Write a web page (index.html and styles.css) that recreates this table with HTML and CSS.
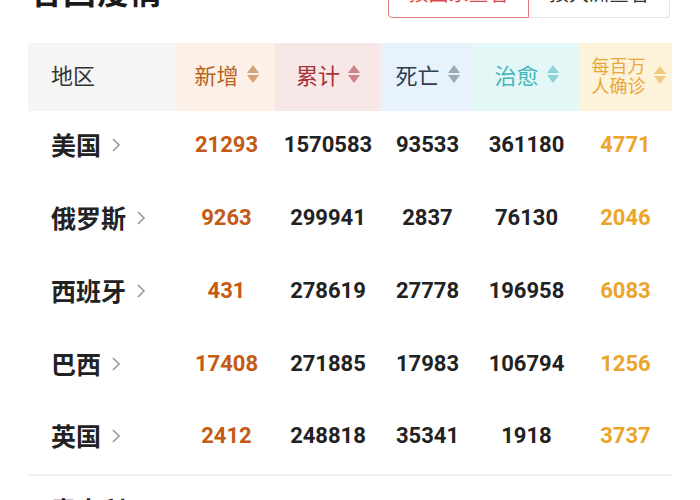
FILE: index.html
```html
<!DOCTYPE html>
<html lang="zh">
<head>
<meta charset="utf-8">
<link rel="stylesheet" href="styles.css">
</head>
<body>
<div class="page">
  <div class="topbar">
    <h1 class="title">各国疫情</h1>
    <div class="switch">
      <span class="btn btn-active">按国家查看</span>
      <span class="btn">按大洲查看</span>
    </div>
  </div>

  <div class="table">
    <div class="head">
      <div class="hc hc-area">地区</div>
      <div class="hc hc-new">新增<span class="sort"><i class="up"></i><i class="down"></i></span></div>
      <div class="hc hc-total">累计<span class="sort"><i class="up"></i><i class="down"></i></span></div>
      <div class="hc hc-dead">死亡<span class="sort"><i class="up"></i><i class="down"></i></span></div>
      <div class="hc hc-heal">治愈<span class="sort"><i class="up"></i><i class="down"></i></span></div>
      <div class="hc hc-pm"><span class="two"><span class="ln">每百万</span><span class="ln">人确诊</span></span><span class="sort"><i class="up"></i><i class="down"></i></span></div>
    </div>

    <div class="row">
      <div class="name">美国<svg class="chev" viewBox="0 0 10 16"><polyline points="2,2 8,8 2,14"/></svg></div>
      <div class="c new">21293</div><div class="c">1570583</div><div class="c">93533</div><div class="c">361180</div><div class="c pm">4771</div>
    </div>
    <div class="row">
      <div class="name">俄罗斯<svg class="chev" viewBox="0 0 10 16"><polyline points="2,2 8,8 2,14"/></svg></div>
      <div class="c new">9263</div><div class="c">299941</div><div class="c">2837</div><div class="c">76130</div><div class="c pm">2046</div>
    </div>
    <div class="row">
      <div class="name">西班牙<svg class="chev" viewBox="0 0 10 16"><polyline points="2,2 8,8 2,14"/></svg></div>
      <div class="c new">431</div><div class="c">278619</div><div class="c">27778</div><div class="c">196958</div><div class="c pm">6083</div>
    </div>
    <div class="row">
      <div class="name">巴西<svg class="chev" viewBox="0 0 10 16"><polyline points="2,2 8,8 2,14"/></svg></div>
      <div class="c new">17408</div><div class="c">271885</div><div class="c">17983</div><div class="c">106794</div><div class="c pm">1256</div>
    </div>
    <div class="row row-last">
      <div class="name">英国<svg class="chev" viewBox="0 0 10 16"><polyline points="2,2 8,8 2,14"/></svg></div>
      <div class="c new">2412</div><div class="c">248818</div><div class="c">35341</div><div class="c">1918</div><div class="c pm">3737</div>
    </div>
    <div class="row">
      <div class="name">意大利<svg class="chev" viewBox="0 0 10 16"><polyline points="2,2 8,8 2,14"/></svg></div>
      <div class="c new">665</div><div class="c">226699</div><div class="c">32169</div><div class="c">129401</div><div class="c pm">3749</div>
    </div>
  </div>
</div>
</body>
</html>
```

FILE: styles.css
```css
* { box-sizing: border-box; }
html, body { margin: 0; padding: 0; background: #fff; }
body {
  font-family: Roboto, "Noto Sans CJK SC", sans-serif;
  color: #222;
  overflow: hidden;
}
.page {
  width: 700px;
  margin-top: -23px;
}
.topbar {
  display: flex;
  justify-content: space-between;
  padding: 0 30px 0 30px;
  height: 42px;
}
.title {
  margin: -6px 0 0 0;
  font-size: 33px;
  font-weight: 700;
  line-height: 38px;
  color: #1a1a1a;
  font-family: "Noto Sans CJK SC", sans-serif;
}
.switch {
  display: flex;
  align-self: flex-start;
}
.btn {
  width: 141px;
  height: 41px;
  border: 1px solid #e2e2e2;
  border-left: none;
  border-radius: 0 4px 4px 0;
  display: flex;
  align-items: center;
  justify-content: center;
  padding-bottom: 10px;
  font-size: 20px;
  color: #333;
  font-family: "Noto Sans CJK SC", sans-serif;
}
.btn-active {
  border: 1px solid #e27a7a;
  border-radius: 4px 0 0 4px;
  color: #e04848;
}
.table {
  margin: 24px 28px 0 28px;
}
.head, .row {
  display: grid;
  grid-template-columns: 150px 97px 106px 93px 105px 93px;
}
.head { height: 68px; }
.hc {
  display: flex;
  align-items: center;
  justify-content: center;
  padding-bottom: 7px;
  font-size: 22px;
  font-family: "Noto Sans CJK SC", sans-serif;
}
.hc-area { background: #f5f5f5; color: #333; justify-content: flex-start; padding-left: 23px; }
.hc-new { background: #fdf0e7; color: #b8651f; }
.hc-total { background: #f8e7e7; color: #a8343c; }
.hc-dead { background: #e8f2fc; color: #2e3d4f; }
.hc-heal { background: #e4f7f7; color: #45b6bb; }
.hc-pm { background: #fdf2da; color: #e9a838; padding-bottom: 4px; }
.two {
  display: flex;
  flex-direction: column;
  font-size: 18px;
  margin-left: 6px;
}
.two .ln { display: block; line-height: 20px; height: 20px; overflow: visible; }
.sort {
  display: inline-flex;
  flex-direction: column;
  gap: 2px;
  margin-left: 8px;
  opacity: 0.55;
}
.sort i {
  display: block;
  width: 0; height: 0;
  border-left: 6.5px solid transparent;
  border-right: 6.5px solid transparent;
}
.sort .up { border-bottom: 8px solid currentColor; }
.sort .down { border-top: 8px solid currentColor; }
.hc-dead .sort { opacity: 0.4; }
.row {
  height: 73px;
  align-items: center;
  padding-bottom: 7px;
}
.row-last { border-bottom: 2px solid #f2f2f2; }
.name {
  display: flex;
  align-items: center;
  padding-left: 23px;
  font-size: 25px;
  font-weight: 700;
  font-family: "Noto Sans CJK SC", sans-serif;
  color: #222;
}
.chev {
  width: 10px;
  height: 16px;
  margin-left: 10px;
  margin-top: 2px;
}
.chev polyline {
  fill: none;
  stroke: #999;
  stroke-width: 1.6;
}
.c {
  text-align: center;
  font-size: 22px;
  font-weight: 700;
  color: #222;
}
.c.new { color: #c45a14; }
.c.pm { color: #eba52c; }
```
